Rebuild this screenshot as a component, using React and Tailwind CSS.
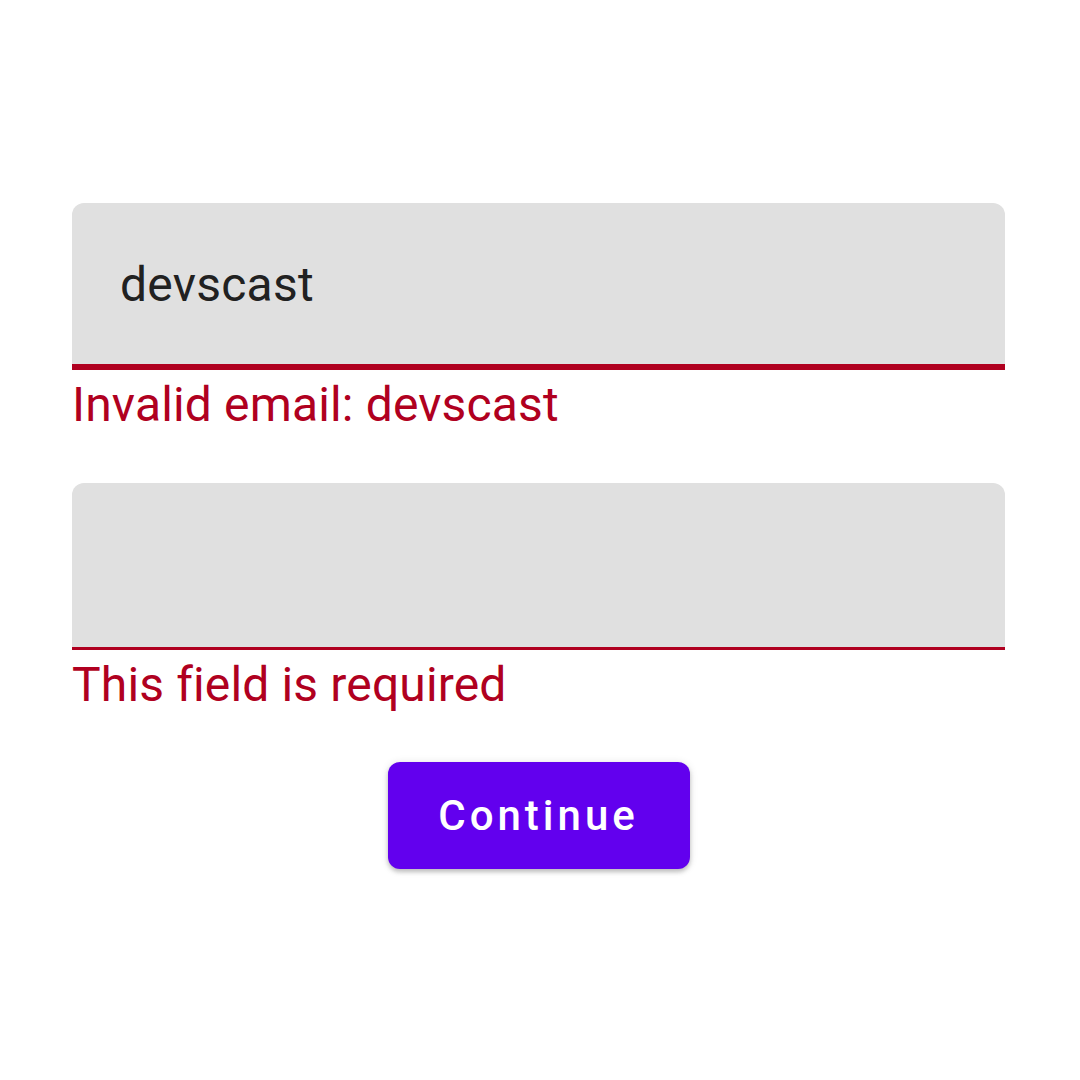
export default function App() {
  return (
    <div className="w-[1080px] h-[1080px] bg-white" style={{ fontFamily: "Roboto, 'Liberation Sans', sans-serif" }}>
      <div className="ml-[72px] w-[933px] pt-[203px] flex flex-col">
        <div className="h-[167px] bg-[#e0e0e0] rounded-t-[12px] border-b-[6px] border-[#b00020] flex items-center pl-[48px] pt-[2px]">
          <span className="text-[48px] leading-[56px] tracking-[0.25px] text-[#212121]">devscast</span>
        </div>
        <div className="mt-[7px] text-[48px] leading-[56px] tracking-[0.15px] text-[#b00020]">Invalid email: devscast</div>
        <div className="mt-[50px] h-[167px] bg-[#e0e0e0] rounded-t-[12px] border-b-[3px] border-[#b00020]"></div>
        <div className="mt-[7px] text-[48px] leading-[56px] tracking-[0.15px] text-[#b00020]">This field is required</div>
        <div className="mt-[49px] flex justify-center">
          <button className="w-[302px] h-[107px] rounded-[12px] bg-[#6200ee] text-white text-[42px] font-medium tracking-[4px] shadow-[0_3px_4px_rgba(0,0,0,0.2),0_1px_8px_rgba(0,0,0,0.12)] flex items-center justify-center">
            Continue
          </button>
        </div>
      </div>
    </div>
  );
}
